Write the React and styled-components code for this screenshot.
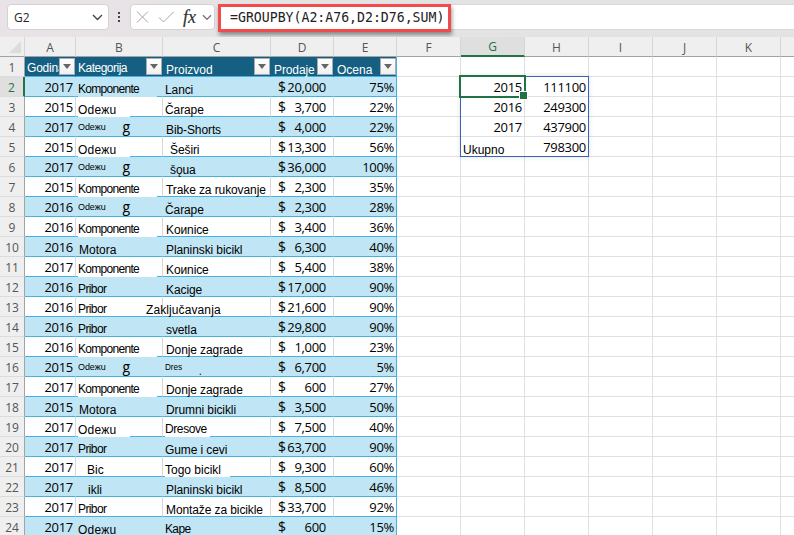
import React from "react";
import styled, { createGlobalStyle } from "styled-components";

const GlobalStyle = createGlobalStyle`
  * {
    box-sizing: border-box;
  }
  body {
    margin: 0;
    overflow: hidden;
    background: #fff;
    font-family: "Open Sans", "Noto Sans", sans-serif;
  }
`;

const Window = styled.div`
  width: 794px;
  height: 535px;
  overflow: hidden;
  background: #fff;
`;

const Toolbar = styled.header`
  display: flex;
  align-items: flex-start;
  height: 37px;
  padding: 4px 0 0 7px;
  background: linear-gradient(90deg, #e9e3e7 0, #e5e3e4 250px, #e3e3e3 100%);
`;

const NameBox = styled.div`
  display: flex;
  align-items: center;
  justify-content: space-between;
  width: 102px;
  height: 26px;
  padding: 0 5px 0 6px;
  background: #fff;
  border: 1px solid #d5d1d4;
  border-radius: 4px;
  font-size: 12px;
  color: #262626;
`;

const Dots = styled.div`
  display: flex;
  flex-direction: column;
  gap: 2px;
  width: 2px;
  margin: 8px 10px 0 9px;

  i {
    width: 2px;
    height: 2px;
    background: #444;
  }
`;

const Actions = styled.div`
  display: flex;
  align-items: center;
  width: 85px;
  height: 26px;
  padding-left: 5px;
  background: #fff;
  border: 1px solid #d5d1d4;
  border-radius: 4px;
`;

const Fx = styled.span`
  width: 19px;
  margin-left: 9px;
  font: italic 18px/22px "Liberation Serif", serif;
  color: #333;
  -webkit-text-stroke: 0.2px #333;
`;

const FormulaBar = styled.div`
  flex: 1;
  height: 26px;
  margin-left: 3px;
  background: #fff;
  border-top: 1px solid #d9d9d9;
  border-bottom: 1px solid #d9d9d9;
`;

const Formula = styled.div`
  width: 233px;
  height: 28px;
  margin-top: -1px;
  padding-left: 9px;
  border: 3px solid #f04c4c;
  background: #fff;
  box-shadow: 1px 3px 4px rgba(0, 0, 0, 0.4);
  font: 13.2px/21px "DejaVu Sans Mono", monospace;
  white-space: pre;
  color: #222;
`;

const Sheet = styled.div`
  display: grid;
  grid-template-columns: 25px 51px 87px 108px 63px 63px 64px 64px 64px 64px 64px 64px 13px;
  grid-auto-rows: 20px;
  width: 794px;
`;

const Head = styled.div`
  display: flex;
  align-items: center;
  justify-content: center;
  padding-top: 1px;
  font-size: 12px;
  color: ${(props) => (props.$active ? "#217346" : "#555")};
  background: ${(props) => (props.$active ? "#dfdfdf" : "#efefef")};
`;

const ColumnHead = styled(Head)`
  border-right: 1px solid #d6d6d6;
  border-bottom: ${(props) =>
    props.$active ? "2px solid #217346" : "1px solid #a3a3a3"};

  &:empty {
    border-right: 0;
  }
`;

const RowHead = styled(Head)`
  border-bottom: 1px solid #dcdcdc;
  border-right: ${(props) =>
    props.$active ? "2px solid #217346" : "1px solid #a3a3a3"};
`;

const Corner = styled(Head)`
  align-items: flex-end;
  justify-content: flex-end;
  padding: 0 3px 3px 0;
  border-right: 1px solid #d6d6d6;
  border-bottom: 1px solid #a3a3a3;
`;

const Cell = styled.div`
  position: relative;
  display: flex;
  justify-content: flex-end;
  padding-right: 2px;
  border-right: 1px solid #e0e0e0;
  border-bottom: 1px solid #e0e0e0;
  font-size: 13px;
  letter-spacing: -0.3px;
  line-height: 20px;
  white-space: pre;
  color: #000;
`;

const EdgeCell = styled(Cell)`
  border-right: 0;
`;

const TableCell = styled(Cell)`
  background: ${(props) => (props.$band ? "#c0e6f5" : "#fff")};
  border-bottom-color: #45b0e1;
  border-right-color: ${(props) =>
    props.$last ? "#45b0e1" : props.$band ? "#c0e6f5" : "#d9d9d9"};
`;

const TextCell = styled(TableCell)`
  justify-content: flex-start;
  padding: 0;
`;

const MoneyCell = styled(TableCell)`
  justify-content: space-between;
  padding: 0 7px 0 7px;
`;

const Dollar = styled.span`
  font-size: 14px;
`;

const TitleCell = styled(Cell)`
  justify-content: space-between;
  padding: 0;
  background: #156082;
  border-right-color: ${(props) => (props.$last ? "#45b0e1" : "#156082")};
  border-bottom-color: #45b0e1;
`;

// the label paints its own fill, $cover is how wide it hides the row line
const Label = styled.span`
  position: relative;
  z-index: 1;
  flex: none;
  height: 20px;
  width: ${(props) => (props.$cover ? `${props.$cover}px` : "auto")};
  margin-left: ${(props) => props.$x}px;
  padding-top: ${(props) => props.$drop}px;
  background: ${(props) =>
    props.$cover ? (props.$band ? "#c0e6f5" : "#fff") : "transparent"};
  font-family: "Liberation Sans", Arial, sans-serif;
  font-size: ${(props) => props.$size}px;
  line-height: 21px;
  letter-spacing: ${(props) => props.$spacing}px;
  color: ${(props) => props.$color || "#000"};
`;

const LeftLabel = styled(Label)`
  margin-right: auto;
`;

const Tail = styled.span`
  margin-left: ${(props) => props.$gap}px;
  padding-top: ${(props) => props.$drop || 0}px;
  font-size: ${(props) => props.$size || 14}px;
`;

const FilterButton = styled.span`
  position: absolute;
  top: 1px;
  right: 0;
  z-index: 2;
  display: flex;
  align-items: center;
  justify-content: center;
  width: 16px;
  height: 17px;
  border: 1px solid #a9adb3;
  background: linear-gradient(#fff, #f0f0f2);

  &::after {
    content: "";
    border: 4px solid transparent;
    border-top: 5px solid #666;
    border-bottom: 0;
  }
`;

const SpillRange = styled.div`
  position: absolute;
  z-index: 2;
  top: -1px;
  left: -1px;
  width: 129px;
  height: 81px;
  border: 1px solid #3366bb;
  box-shadow: 0 0 5px rgba(0, 0, 0, 0.12);
`;

const Selection = styled.div`
  position: absolute;
  z-index: 3;
  top: -2px;
  left: -2px;
  width: 67px;
  height: 23px;
  border: 2px solid #217346;

  &::after {
    content: "";
    position: absolute;
    right: -4px;
    bottom: -4px;
    width: 7px;
    height: 7px;
    background: #217346;
    border: 1px solid #fff;
  }
`;

const columns = ["A", "B", "C", "D", "E", "F", "G", "H", "I", "J", "K"];

const titles = [
  { text: "Godina", x: 2, drop: 1, size: 12, spacing: -0.2 },
  { text: "Kategorija", x: 2, drop: 1, size: 12, spacing: -0.5 },
  { text: "Proizvod", x: 3, drop: 3, size: 12, spacing: 0 },
  { text: "Prodaje", x: 3, drop: 3, size: 12, spacing: -0.1 },
  { text: "Ocena", x: 3, drop: 3, size: 12, spacing: 0 },
];

const categories = {
  Komponente: { x: 2, drop: 2, size: 12, spacing: -0.7, cover: 79 },
  Odeжu: { x: 2, drop: 3, size: 12, spacing: 0.2, cover: 52 },
  "Odeжu g": { text: "Odeжu", x: 2, drop: 0, size: 9, spacing: -0.1, tail: "g" },
  Motora: { x: 3, drop: 3, size: 12, spacing: 0 },
  Pribor: { x: 2, drop: 2, size: 12, spacing: -0.6 },
  Bic: { x: 11, drop: 3, size: 12, spacing: 0 },
  ikli: { x: 12, drop: 3, size: 12, spacing: 0 },
};

const products = {
  Lanci: { x: 2 },
  Čarape: { x: 2 },
  Šeširi: { x: 7 },
  šǫua: { x: 7 },
  Zaključavanja: { x: -17, spacing: 0.1 },
  Dres: { x: 2, drop: 0, size: 8.2, spacing: -0.1, tail: "." },
  Dresove: { x: 2, drop: 2, size: 12, spacing: -0.4, cover: 45 },
  "Gume i cevi": { x: 2 },
  "Togo bicikl": { x: 2, cover: 65, spacing: 0 },
  Kape: { x: 2, drop: 2, size: 12, spacing: -0.65 },
};

const rows = [
  [2017, "Komponente", "Lanci", "20,000", "75%"],
  [2015, "Odeжu", "Čarape", "3,700", "22%"],
  [2017, "Odeжu g", "Bib-Shorts", "4,000", "22%"],
  [2015, "Odeжu", "Šeširi", "13,300", "56%"],
  [2017, "Odeжu g", "šǫua", "36,000", "100%"],
  [2015, "Komponente", "Trake za rukovanje", "2,300", "35%"],
  [2016, "Odeжu g", "Čarape", "2,300", "28%"],
  [2016, "Komponente", "Koиnice", "3,400", "36%"],
  [2016, "Motora", "Planinski bicikl", "6,300", "40%"],
  [2017, "Komponente", "Koиnice", "5,400", "38%"],
  [2016, "Pribor", "Kacige", "17,000", "90%"],
  [2016, "Pribor", "Zaključavanja", "21,600", "90%"],
  [2016, "Pribor", "svetla", "29,800", "90%"],
  [2016, "Komponente", "Donje zagrade", "1,000", "23%"],
  [2015, "Odeжu g", "Dres", "6,700", "5%"],
  [2017, "Komponente", "Donje zagrade", "600", "27%"],
  [2015, "Motora", "Drumni bicikli", "3,500", "50%"],
  [2017, "Odeжu", "Dresove", "7,500", "40%"],
  [2017, "Pribor", "Gume i cevi", "63,700", "90%"],
  [2017, "Bic", "Togo bicikl", "9,300", "60%"],
  [2017, "ikli", "Planinski bicikl", "8,500", "46%"],
  [2017, "Pribor", "Montaže za bicikle", "33,700", "92%"],
  [2017, "Odeжu", "Kape", "600", "15%"],
];

const totals = [
  ["2015", "111100"],
  ["2016", "249300"],
  ["2017", "437900"],
  ["Ukupno", "798300"],
];

const Chevron = ({ color = "#444", size = 11 }) => (
  <svg width={size} height="7" viewBox="0 0 11 7" fill="none" stroke={color}>
    <path d="M1 1l4.5 4.5L10 1" strokeWidth="1.4" />
  </svg>
);

const CellLabel = ({ text, look, band, color }) => (
  <Label
    $x={look.x}
    $drop={look.drop ?? 3}
    $size={look.size ?? 12}
    $spacing={look.spacing ?? -0.1}
    $cover={look.cover}
    $band={band}
    $color={color}
  >
    {look.text || text}
  </Label>
);

const DataRow = ({ row, band }) => {
  const [year, category, product, sales, rating] = row;
  const categoryLook = categories[category];
  const productLook = products[product] || { x: 3 };

  return (
    <>
      <TableCell $band={band}>{year}</TableCell>
      <TextCell $band={band}>
        <CellLabel text={category} look={categoryLook} band={band} />
        {categoryLook.tail && <Tail $gap={17}>{categoryLook.tail}</Tail>}
      </TextCell>
      <TextCell $band={band}>
        <CellLabel text={product} look={productLook} band={band} />
        {productLook.tail && (
          <Tail $gap={17} $drop={4} $size={10}>
            {productLook.tail}
          </Tail>
        )}
      </TextCell>
      <MoneyCell $band={band}>
        <Dollar>$</Dollar>
        <span>{sales}</span>
      </MoneyCell>
      <TableCell $band={band} $last>
        {rating}
      </TableCell>
    </>
  );
};

const TotalCells = ({ index }) => {
  const [name, value] = totals[index] || [];

  return (
    <>
      <Cell>
        {name === "Ukupno" ? (
          <LeftLabel $x={2} $drop={3} $size={12} $spacing={0}>
            {name}
          </LeftLabel>
        ) : (
          name
        )}
        {index === 0 && (
          <>
            <SpillRange />
            <Selection />
          </>
        )}
      </Cell>
      <Cell>{value}</Cell>
    </>
  );
};

const App = () => {
  return (
    <Window>
      <GlobalStyle />
      <Toolbar>
        <NameBox>
          G2
          <Chevron />
        </NameBox>
        <Dots>
          <i />
          <i />
          <i />
        </Dots>
        <Actions>
          <svg width="38" height="14" fill="none" stroke="#a6a6a6">
            <path d="M1 1.500l11 11M12 1.500l-11 11M23 7.500l4.500 4.500L38 1.500" />
          </svg>
          <Fx>fx</Fx>
          <Chevron color="#777" size={10} />
        </Actions>
        <FormulaBar>
          <Formula>=GROUPBY(A2:A76,D2:D76,SUM)</Formula>
        </FormulaBar>
      </Toolbar>
      <Sheet>
        <Corner>
          <svg width="12" height="12">
            <path d="M12 0v12H0z" fill="#dcdcdc" />
          </svg>
        </Corner>
        {columns.map((name) => (
          <ColumnHead key={name} $active={name === "G"}>
            {name}
          </ColumnHead>
        ))}
        <ColumnHead />

        <RowHead>1</RowHead>
        {titles.map((title, i) => (
          <TitleCell key={title.text} $last={i === 4}>
            <CellLabel text={title.text} look={title} color="#fff" />
            <FilterButton />
          </TitleCell>
        ))}
        {columns.slice(5).map((name) => (
          <Cell key={name} />
        ))}
        <EdgeCell />

        {rows.map((row, i) => (
          <React.Fragment key={i}>
            <RowHead $active={i === 0}>{i + 2}</RowHead>
            <DataRow row={row} band={i % 2 === 0} />
            <Cell />
            <TotalCells index={i} />
            {columns.slice(8).map((name) => (
              <Cell key={name} />
            ))}
            <EdgeCell />
          </React.Fragment>
        ))}
      </Sheet>
    </Window>
  );
};

export default App;
